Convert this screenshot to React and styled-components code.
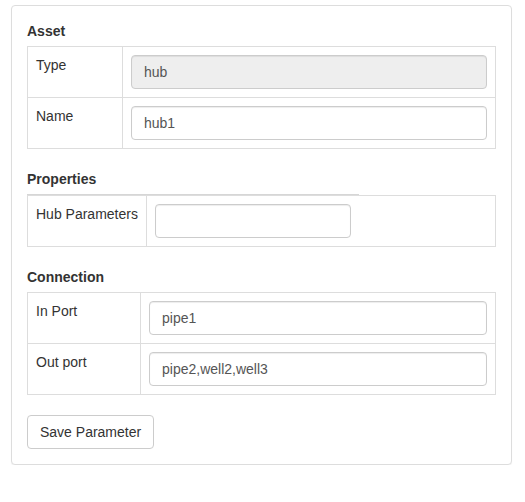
import React from 'react';
import styled, { createGlobalStyle } from 'styled-components';

const GlobalStyle = createGlobalStyle`
  html, body {
    margin: 0;
    padding: 0;
    background: #fff;
  }
  body {
    font-family: "Liberation Sans", Arial, Helvetica, sans-serif;
    font-size: 14px;
    line-height: 20px;
    color: #333;
  }
  * {
    box-sizing: border-box;
  }
`;

const Page = styled.div`
  padding: 5px 13px 0 11px;
`;

const Panel = styled.div`
  background: #fff;
  border: 1px solid #ddd;
  border-radius: 4px;
  box-shadow: 0 1px 1px rgba(0, 0, 0, 0.05);
  padding: 15px;
`;

const SectionTitle = styled.div`
  font-weight: bold;
  margin-bottom: ${(p) => (p.$tight ? '0' : '5px')};
  line-height: 20px;
`;

// darker header line sitting on top of the Properties table
const TopRule = styled.div`
  width: 332px;
  height: 1px;
  margin-top: 5px;
  background: #d6d6d6;
`;

const FieldTable = styled.div`
  display: grid;
  grid-template-columns: ${(p) => p.$labelWidth}px 1fr;
  border: 1px solid #ddd;
  margin-bottom: 20px;
`;

const LabelCell = styled.div`
  padding: 8px;
  border-right: 1px solid #ddd;
  border-bottom: ${(p) => (p.$last ? 'none' : '1px solid #ddd')};
  white-space: nowrap;
`;

const ValueCell = styled.div`
  padding: 8px;
  border-bottom: ${(p) => (p.$last ? 'none' : '1px solid #ddd')};
`;

const TextInput = styled.input`
  display: block;
  width: ${(p) => (p.$width ? `${p.$width}px` : '100%')};
  height: 34px;
  padding: 6px 12px;
  font-family: inherit;
  font-size: 14px;
  line-height: 20px;
  color: #555;
  background: ${(p) => (p.disabled ? '#eee' : '#fff')};
  border: 1px solid #ccc;
  border-radius: 4px;
  box-shadow: inset 0 1px 1px rgba(0, 0, 0, 0.075);
  outline: none;
  opacity: 1;
  -webkit-text-fill-color: #555;
`;

const Button = styled.button`
  display: inline-block;
  height: 34px;
  padding: 6px 12px;
  font-family: inherit;
  font-size: 14px;
  line-height: 20px;
  color: #333;
  background: #fff;
  border: 1px solid #ccc;
  border-radius: 4px;
  cursor: pointer;
`;

function Section({ title, labelWidth, rows, rule }) {
  return (
    <>
      <SectionTitle $tight={rule}>{title}</SectionTitle>
      {rule && <TopRule />}
      <FieldTable $labelWidth={labelWidth}>
        {rows.map((r, i) => {
          const last = i === rows.length - 1;
          return (
            <React.Fragment key={r.label}>
              <LabelCell $last={last}>{r.label}</LabelCell>
              <ValueCell $last={last}>
                <TextInput
                  defaultValue={r.value}
                  disabled={r.disabled}
                  $width={r.width}
                />
              </ValueCell>
            </React.Fragment>
          );
        })}
      </FieldTable>
    </>
  );
}

export default function App() {
  return (
    <Page>
      <GlobalStyle />
      <Panel>
        <Section
          title="Asset"
          labelWidth={95}
          rows={[
            { label: 'Type', value: 'hub', disabled: true },
            { label: 'Name', value: 'hub1' },
          ]}
        />
        <Section
          title="Properties"
          labelWidth={119}
          rule
          rows={[{ label: 'Hub Parameters', value: '', width: 196 }]}
        />
        <Section
          title="Connection"
          labelWidth={113}
          rows={[
            { label: 'In Port', value: 'pipe1' },
            { label: 'Out port', value: 'pipe2,well2,well3' },
          ]}
        />
        <Button>Save Parameter</Button>
      </Panel>
    </Page>
  );
}
